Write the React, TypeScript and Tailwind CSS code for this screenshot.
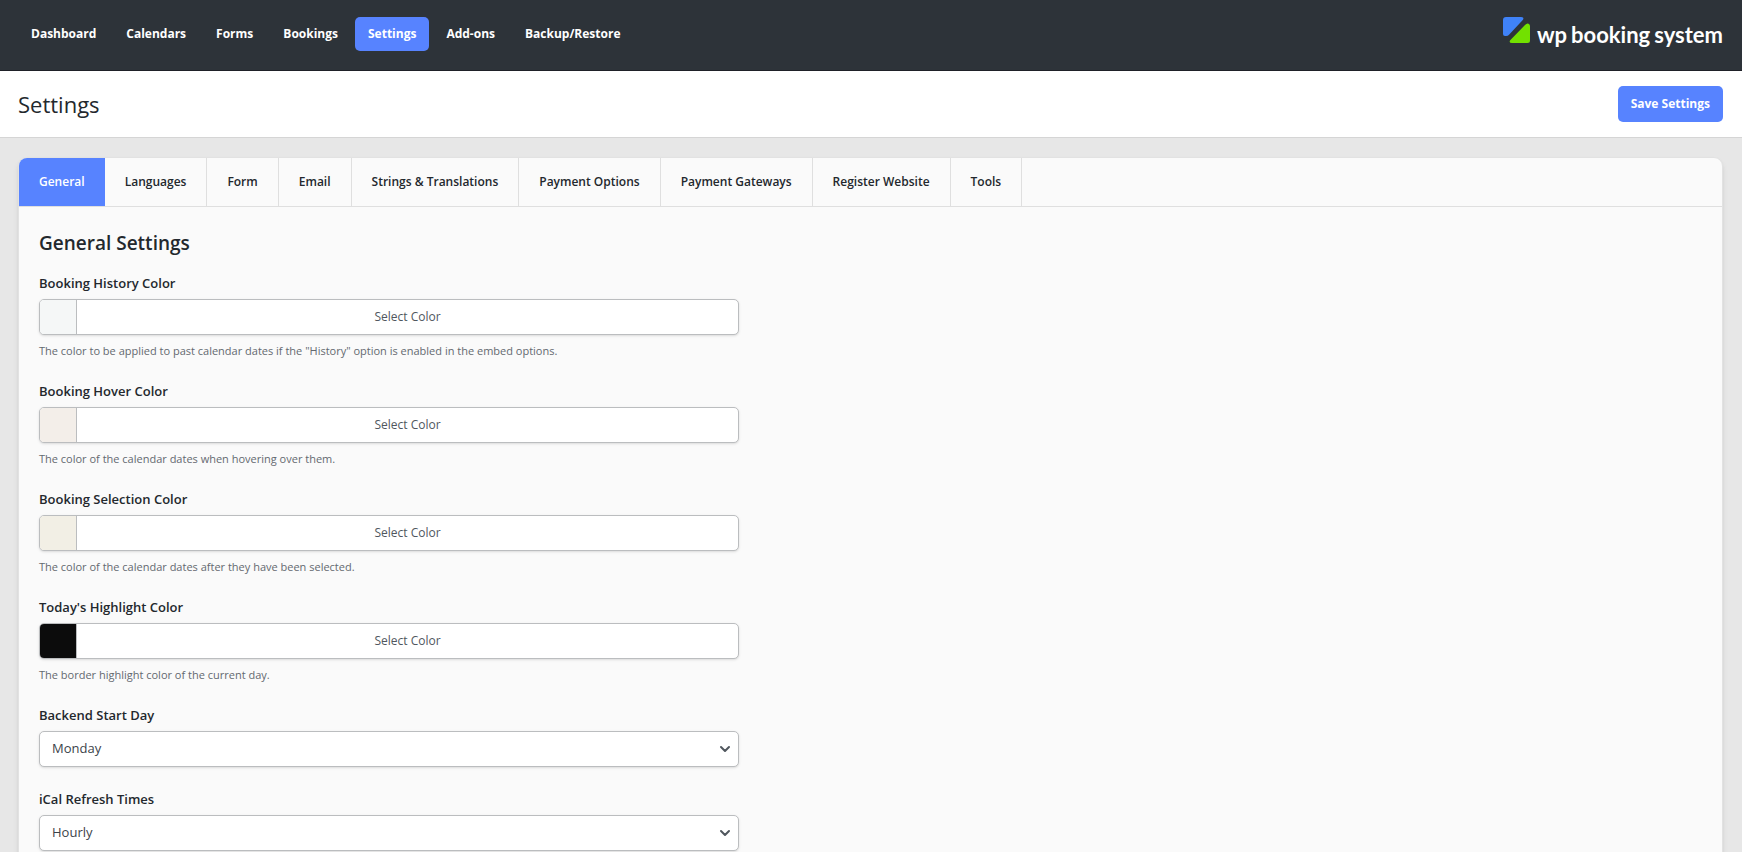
import React from 'react';
import { ChevronDown } from 'lucide-react';

const navItems = ['Dashboard', 'Calendars', 'Forms', 'Bookings', 'Settings', 'Add-ons', 'Backup/Restore'];

const tabs = [
  'General',
  'Languages',
  'Form',
  'Email',
  'Strings & Translations',
  'Payment Options',
  'Payment Gateways',
  'Register Website',
  'Tools',
];

const Logo: React.FC = () => {
  return (
    <a href="#home" className="flex items-start gap-[7px] text-white">
      <svg width="27" height="27" viewBox="0 0 27 27" aria-hidden="true">
        <path d="M3 0H18Q21.500 0 20 2.800L6 17.800Q5 19 3 19H2Q0 19 0 17V3Q0 0 3 0Z" fill="#3f82f7" />
        <path d="M25 6.500Q27 7 27 9V23.500Q27 26 24.500 26H9Q5.500 26 7.200 23.300L22 8Q23.500 6.300 25 6.500Z" fill="#72e100" />
      </svg>
      <span className="flex gap-1 font-['Lato',sans-serif] text-[22px] leading-9 font-bold">
        <span>wp</span>
        <span>booking</span>
        <span>system</span>
      </span>
    </a>
  );
};

type ColorFieldProps = {
  id: string;
  label: string;
  help: string;
  swatch: string;
};

const ColorField: React.FC<ColorFieldProps> = ({ id, label, help, swatch }) => {
  return (
    <div className="mb-[22px]">
      <label htmlFor={id} className="mb-[6px] block text-[13px] leading-5 font-semibold text-[#23282d]">
        {label}
      </label>
      <button
        id={id}
        type="button"
        className="flex h-9 w-full overflow-hidden rounded-[5px] border border-[#bbbdbf] bg-white text-[12px] text-[#50575e] shadow-sm"
      >
        <span className={`h-full w-[37px] border-r border-[#bbbdbf] ${swatch}`} />
        <span className="flex h-full flex-1 items-center justify-center">Select Color</span>
      </button>
      <p className="mt-2 text-[11px] leading-4 text-[#646970]">{help}</p>
    </div>
  );
};

type SelectFieldProps = {
  id: string;
  label: string;
  options: string[];
};

const SelectField: React.FC<SelectFieldProps> = ({ id, label, options }) => {
  return (
    <div className="mb-[22px]">
      <label htmlFor={id} className="mb-[6px] block text-[13px] leading-5 font-semibold text-[#23282d]">
        {label}
      </label>
      <div className="relative">
        <select
          id={id}
          className="h-9 w-full appearance-none rounded-[5px] border border-[#bbbdbf] bg-white px-3 text-[13px] text-[#3c434a] shadow-sm"
        >
          {options.map((option) => (
            <option key={option}>{option}</option>
          ))}
        </select>
        <ChevronDown
          size={16}
          strokeWidth={3}
          className="pointer-events-none absolute top-[10px] right-[6px] text-[#50575e]"
        />
      </div>
    </div>
  );
};

const App: React.FC = () => {
  return (
    <div className="h-screen overflow-hidden bg-[#e7e7e7] font-['Open_Sans','Noto_Sans',sans-serif] text-[#23282d]">
      <header className="flex h-[71px] items-start justify-between border-b border-[#1f2128] bg-[#2d3339] pt-[17px] pr-[19px] pl-[18px]">
        <nav className="flex gap-1">
          {navItems.map((item) => (
            <a
              key={item}
              href={`#${item.toLowerCase()}`}
              className={`rounded-[5px] px-[13px] text-[12px] leading-[34px] font-bold text-white ${
                item === 'Settings' ? 'bg-[#5783ff]' : ''
              }`}
            >
              {item}
            </a>
          ))}
        </nav>
        <Logo />
      </header>

      <div className="flex h-[66px] items-center justify-between bg-white pr-[19px] pl-[18px]">
        <h1 className="text-[22px] leading-8">Settings</h1>
        <button type="button" className="h-9 rounded-[5px] bg-[#5783ff] px-[13px] text-[12px] font-bold text-white">
          Save Settings
        </button>
      </div>

      <main className="border-t border-[#d5d5d5] pt-[19px] pr-[19px] pl-[18px]">
        <div className="overflow-hidden rounded-t-[9px] border border-[#e2e2e2] bg-[#fafafa] shadow-md">
          <div className="flex border-b border-[#dfdfdf]">
            {tabs.map((tab) => (
              <button
                key={tab}
                type="button"
                className={`h-12 px-5 text-[12px] font-semibold ${
                  tab === 'General' ? 'bg-[#5783ff] text-white' : 'border-r border-[#dfdfdf]'
                }`}
              >
                {tab}
              </button>
            ))}
          </div>

          <form className="w-full max-w-[740px] px-5 pt-[23px]">
            <h2 className="mb-[17px] text-[19px] leading-[26px] font-semibold">General Settings</h2>
            <ColorField
              id="history-color"
              label="Booking History Color"
              help={'The color to be applied to past calendar dates if the "History" option is enabled in the embed options.'}
              swatch="bg-[#f5f7f7]"
            />
            <ColorField
              id="hover-color"
              label="Booking Hover Color"
              help="The color of the calendar dates when hovering over them."
              swatch="bg-[#f3eee9]"
            />
            <ColorField
              id="selection-color"
              label="Booking Selection Color"
              help="The color of the calendar dates after they have been selected."
              swatch="bg-[#f2efe5]"
            />
            <ColorField
              id="today-color"
              label="Today's Highlight Color"
              help="The border highlight color of the current day."
              swatch="bg-[#0c0c0c]"
            />
            <SelectField id="start-day" label="Backend Start Day" options={['Monday', 'Sunday']} />
            <SelectField id="ical-refresh" label="iCal Refresh Times" options={['Hourly', 'Daily']} />
          </form>
        </div>
      </main>
    </div>
  );
};

export default App;
